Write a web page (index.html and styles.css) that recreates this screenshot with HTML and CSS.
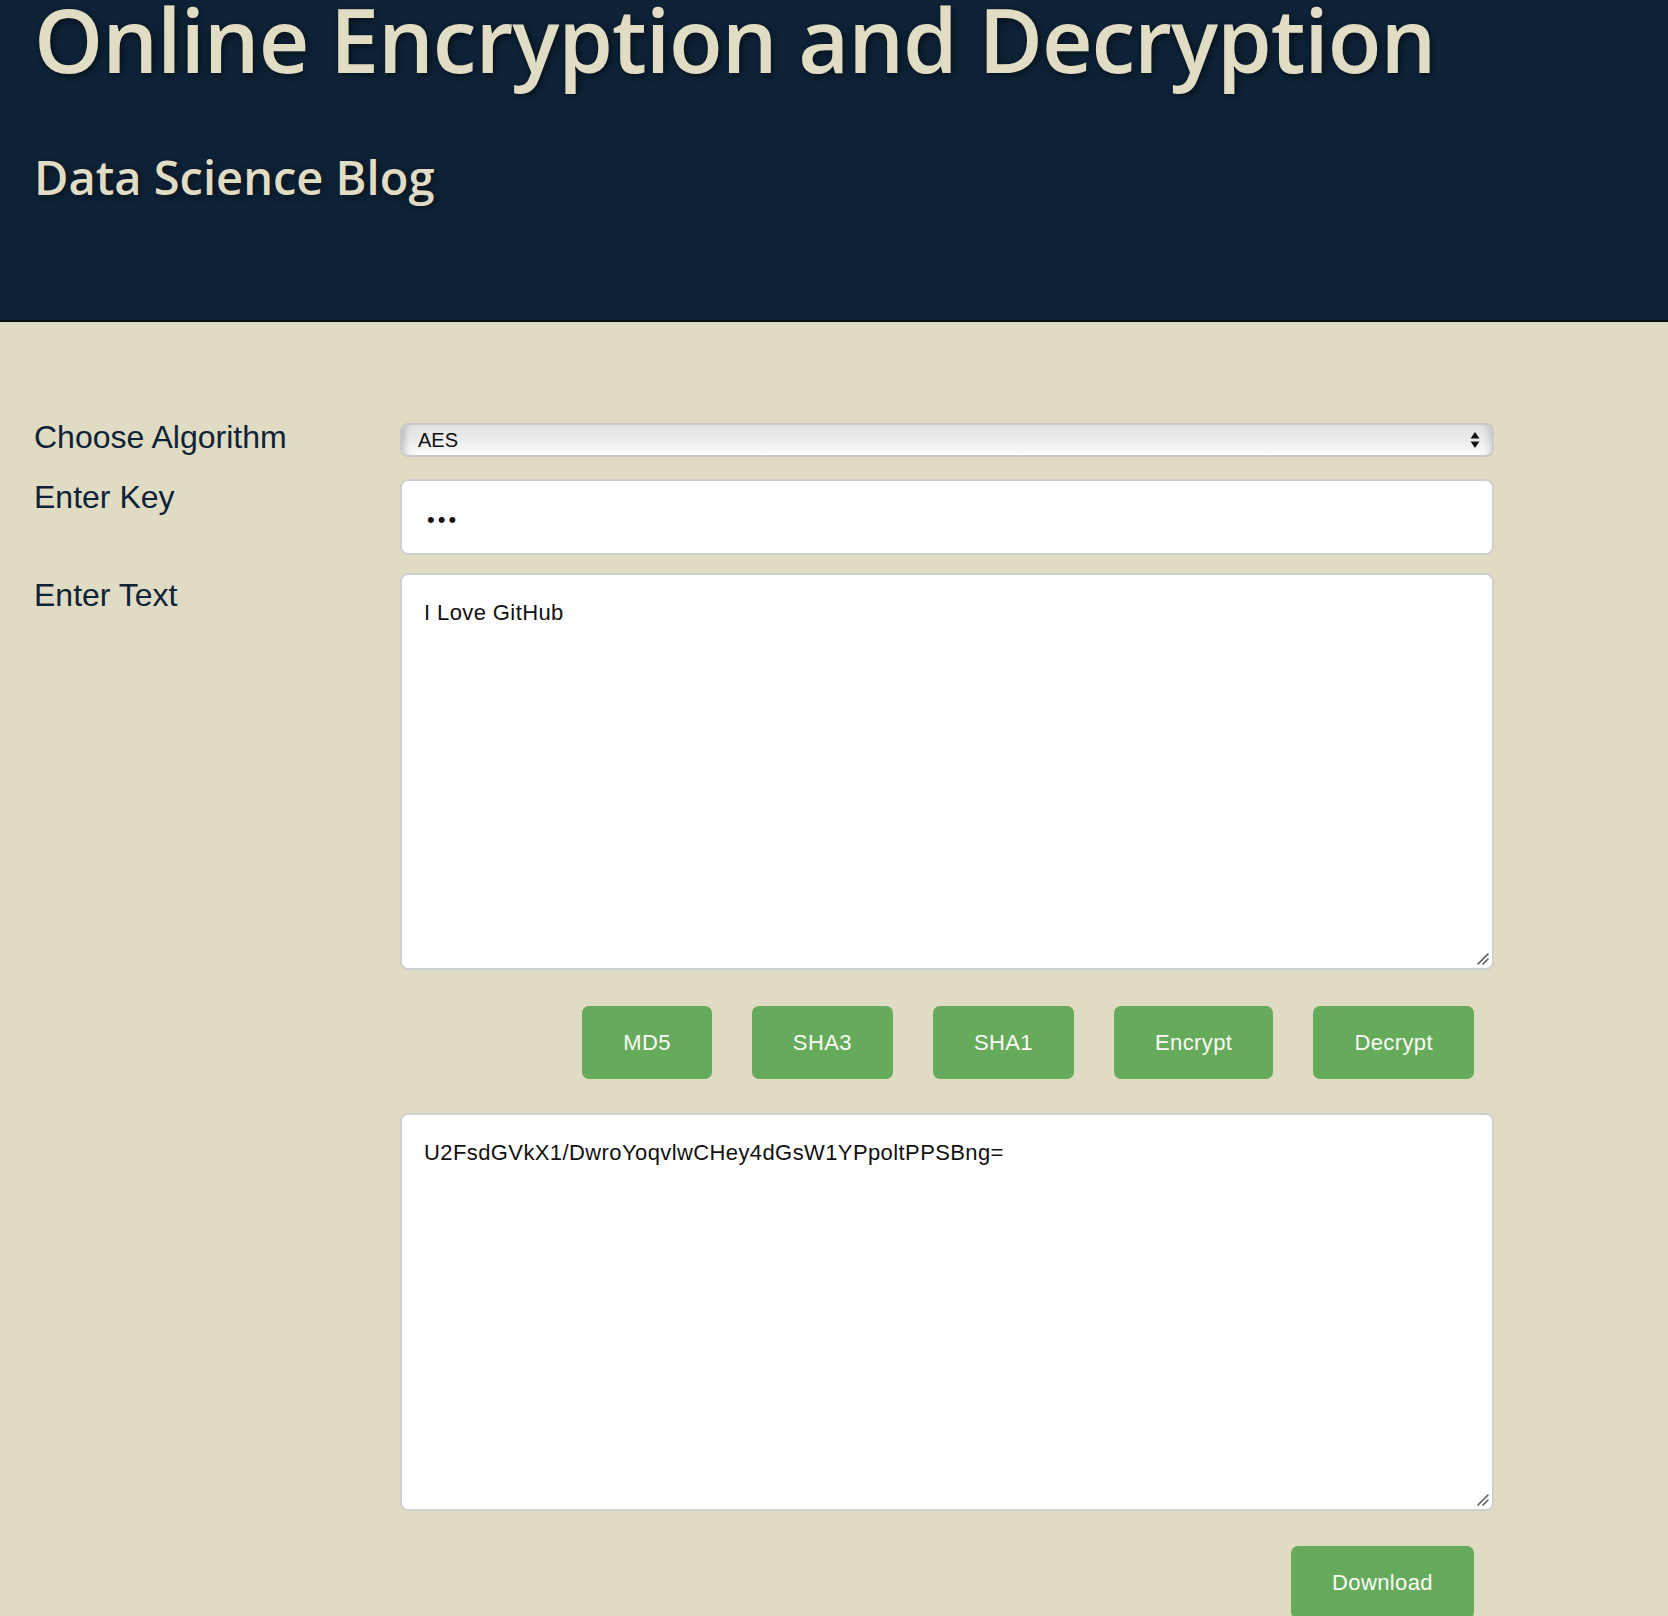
FILE: index.html
```html
<!DOCTYPE html>
<html lang="en">
<head>
<meta charset="utf-8">
<title>Online Encryption and Decryption</title>
<link rel="stylesheet" href="styles.css">
</head>
<body>
<header class="masthead">
  <h1 class="masthead-title">Online Encryption and Decryption</h1>
  <h2 class="masthead-sub">Data Science Blog</h2>
</header>
<main class="form">
  <label class="label label-algo" for="algo">Choose Algorithm</label>
  <div class="select-wrap">
    <select id="algo" class="select">
      <option>AES</option>
      <option>DES</option>
      <option>TripleDES</option>
      <option>Rabbit</option>
      <option>RC4</option>
    </select>
    <svg class="select-arrows" width="10" height="18" viewBox="0 0 10 18" aria-hidden="true">
      <path d="M5 1 L9.5 7.5 L0.5 7.5 Z" fill="#111"/>
      <path d="M5 17 L9.5 10.5 L0.5 10.5 Z" fill="#111"/>
    </svg>
  </div>

  <label class="label label-key" for="key">Enter Key</label>
  <input id="key" class="key-input" type="password" value="abc">

  <label class="label label-text" for="text">Enter Text</label>
  <div class="textbox-wrap">
    <textarea id="text" class="textbox">I Love GitHub</textarea>
    <svg class="grip" width="14" height="14" viewBox="0 0 14 14" aria-hidden="true">
      <path d="M2 12 L12 2 M7 12 L12 7" stroke="#5a5a5a" stroke-width="1.6" stroke-linecap="round"/>
    </svg>
  </div>

  <div class="actions">
    <button class="btn" type="button">MD5</button>
    <button class="btn" type="button">SHA3</button>
    <button class="btn" type="button">SHA1</button>
    <button class="btn" type="button">Encrypt</button>
    <button class="btn" type="button">Decrypt</button>
  </div>

  <div class="textbox-wrap textbox-wrap-out">
    <textarea class="textbox textbox-out" aria-label="Result">U2FsdGVkX1/DwroYoqvlwCHey4dGsW1YPpoltPPSBng=</textarea>
    <svg class="grip" width="14" height="14" viewBox="0 0 14 14" aria-hidden="true">
      <path d="M2 12 L12 2 M7 12 L12 7" stroke="#5a5a5a" stroke-width="1.6" stroke-linecap="round"/>
    </svg>
  </div>

  <div class="actions actions-download">
    <button class="btn" type="button">Download</button>
  </div>
</main>
</body>
</html>
```

FILE: styles.css
```css
* {
  box-sizing: border-box;
}

html, body {
  margin: 0;
  padding: 0;
}

body {
  background: #e0dcc3;
  font-family: "Liberation Sans", Arial, sans-serif;
  color: #0f2338;
}

.masthead {
  background: #0e2338;
  height: 322px;
  border-bottom: 2px solid #0b0f14;
  padding: 0 0 0 34px;
}

.masthead-title {
  margin: 0;
  font-family: "Open Sans", sans-serif;
  font-weight: 600;
  font-size: 88px;
  line-height: 78px;
  letter-spacing: -1.1px;
  color: #e1ddc4;
  text-shadow: 2px 2px 8px rgba(0, 0, 0, 0.6);
  white-space: nowrap;
}

.masthead-sub {
  margin: 76px 0 0;
  font-family: "Open Sans", sans-serif;
  font-weight: 600;
  font-size: 47px;
  line-height: 46px;
  color: #e1ddc4;
  text-shadow: 2px 2px 8px rgba(0, 0, 0, 0.6);
}

.form {
  display: grid;
  grid-template-columns: 366px 1094px;
  align-items: start;
  padding: 101px 0 0 34px;
}

.label {
  font-size: 32px;
  line-height: 32px;
  color: #0f2338;
}

.label-algo {
  margin-top: -2px;
}

.label-key {
  padding-top: 2px;
}

.label-text {
  padding-top: 6px;
}

.select-wrap {
  position: relative;
  height: 34px;
  margin-bottom: 22px;
}

.select {
  appearance: none;
  -webkit-appearance: none;
  width: 100%;
  height: 34px;
  margin: 0;
  padding: 0 0 0 16px;
  border: 2px solid #c9c9c9;
  border-radius: 8px;
  background: linear-gradient(to bottom, #e2e2e2 0%, #eaeaea 45%, #fcfcfc 100%);
  box-shadow: inset 9px 0 6px -6px rgba(0, 0, 0, 0.2), inset -9px 0 6px -6px rgba(0, 0, 0, 0.14);
  font-family: "Liberation Sans", Arial, sans-serif;
  font-size: 20px;
  color: #111;
  outline: none;
}

.select-arrows {
  position: absolute;
  right: 14px;
  top: 8px;
  pointer-events: none;
}

.key-input {
  grid-column: 2;
  width: 100%;
  height: 76px;
  margin: 0 0 18px;
  padding: 6px 24px 0 25px;
  border: 2px solid #cfcfcf;
  border-radius: 8px;
  background: #fff;
  font-family: "Liberation Sans", Arial, sans-serif;
  font-size: 22px;
  letter-spacing: 3px;
  color: #111;
  outline: none;
}

.textbox-wrap {
  grid-column: 2;
  position: relative;
}

.textbox {
  display: block;
  width: 100%;
  height: 397px;
  margin: 0;
  padding: 25px 22px;
  border: 2px solid #cfcfcf;
  border-radius: 8px;
  background: #fff;
  font-family: "Liberation Sans", Arial, sans-serif;
  font-size: 22px;
  letter-spacing: 0.4px;
  line-height: 25px;
  color: #111;
  resize: none;
  outline: none;
}

.textbox-out {
  height: 398px;
}

.grip {
  position: absolute;
  right: 4px;
  bottom: 4px;
  pointer-events: none;
}

.actions {
  grid-column: 2;
  display: flex;
  justify-content: flex-end;
  gap: 40px;
  padding: 36px 20px 34px 0;
}

.actions-download {
  padding: 35px 20px 0 0;
}

.btn {
  height: 73px;
  padding: 0 41px;
  border: none;
  border-radius: 7px;
  background: #66ab5c;
  color: #fbfbf6;
  font-family: "Liberation Sans", Arial, sans-serif;
  font-size: 22px;
  letter-spacing: 0.4px;
  cursor: pointer;
}
```
